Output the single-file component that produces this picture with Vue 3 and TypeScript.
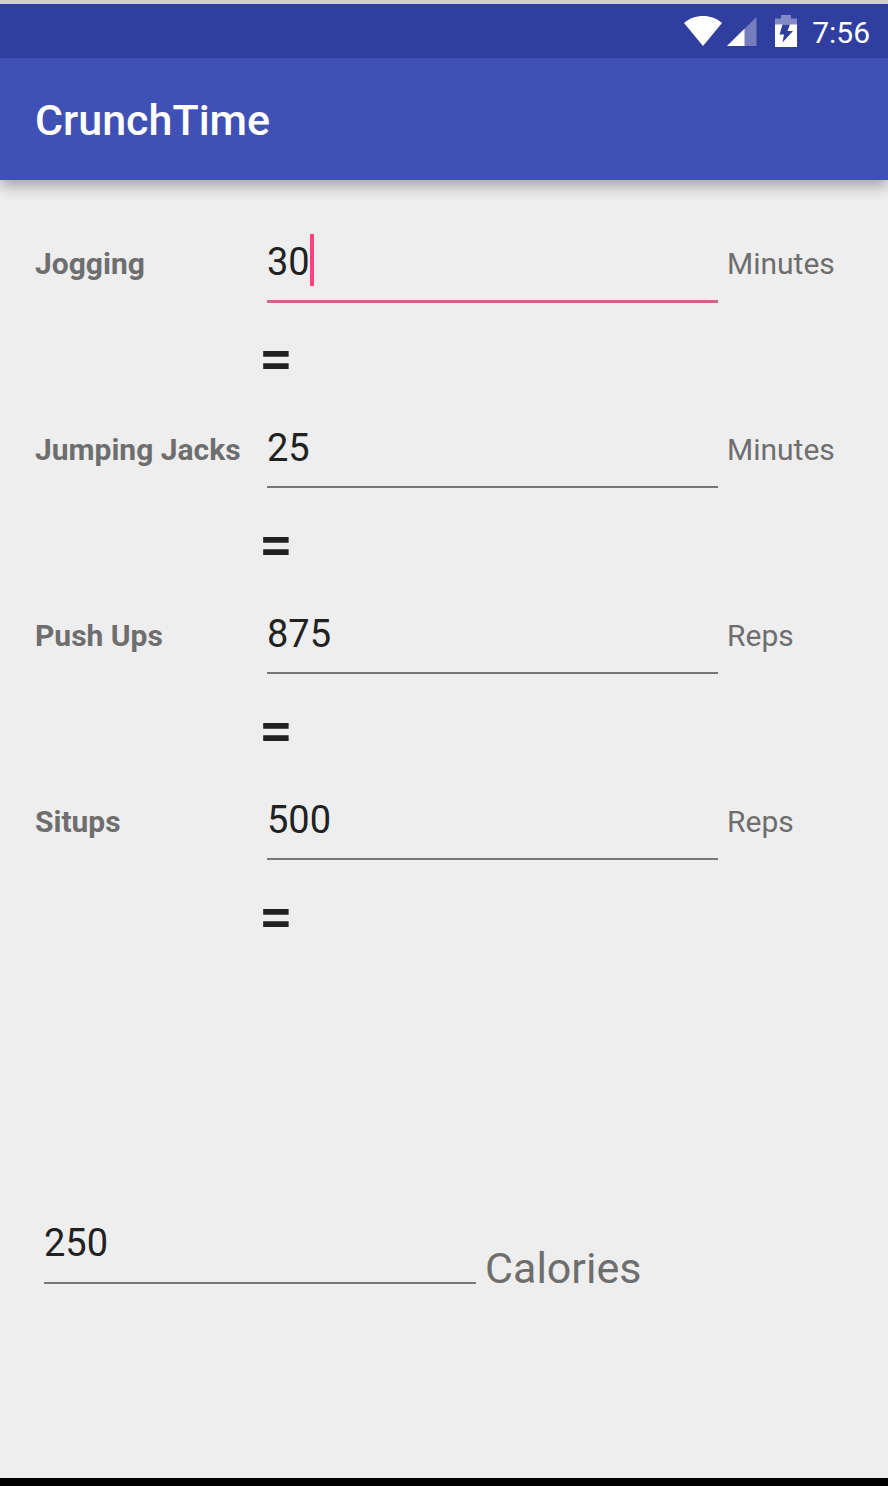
<script setup lang="ts">
import { computed, ref } from 'vue'

interface Exercise {
  id: string
  label: string
  unit: string
  perHundredCalories: number
}

const exercises: Exercise[] = [
  { id: 'jogging', label: 'Jogging', unit: 'Minutes', perHundredCalories: 12 },
  { id: 'jacks', label: 'Jumping Jacks', unit: 'Minutes', perHundredCalories: 10 },
  { id: 'pushups', label: 'Push Ups', unit: 'Reps', perHundredCalories: 350 },
  { id: 'situps', label: 'Situps', unit: 'Reps', perHundredCalories: 200 },
]

const calories = ref(250)
const active = ref('jogging')

const amounts = computed(() =>
  exercises.map((e) => String(Math.round((calories.value * e.perHundredCalories) / 100))),
)

function setAmount(exercise: Exercise, event: Event) {
  const value = Number((event.target as HTMLInputElement).value) || 0
  calories.value = Math.round((value * 100) / exercise.perHundredCalories)
}

function setCalories(event: Event) {
  calories.value = Number((event.target as HTMLInputElement).value) || 0
}
</script>

<template>
  <div class="screen">
    <div class="status">
      <svg class="wifi" width="40" height="32" viewBox="0 0 40 32" aria-hidden="true">
        <path d="M0 8C5 3.500 12 1 19 1s14 2.500 19 7L19 31z" fill="#fff" />
      </svg>
      <svg class="signal" width="30" height="32" viewBox="0 0 30 32" aria-hidden="true">
        <path d="M0 31L29.500 2v29z" fill="#757dbd" />
        <path d="M0 31L17.500 13.800V31z" fill="#fff" />
      </svg>
      <svg class="battery" width="22" height="32" viewBox="0 0 22 32" aria-hidden="true">
        <path d="M0 10V3.500h6V0h10v3.500h6V10z" fill="#838bc5" />
        <path d="M0 9.500h22V32H0z" fill="#fff" />
        <path d="M7.500 9.500H15l-2.500 6.500H18L7.500 27.500l1.500-8H4.500z" fill="#303f9f" />
      </svg>
      <time class="clock">7:56</time>
    </div>
    <header class="bar">
      <h1>CrunchTime</h1>
    </header>
    <main>
      <form class="list" @submit.prevent>
        <template v-for="(item, i) in exercises" :key="item.id">
          <div class="row">
            <label class="name" :for="item.id">{{ item.label }}</label>
            <div class="field" :class="{ active: active === item.id }">
              <input
                :id="item.id"
                type="text"
                inputmode="numeric"
                :value="amounts[i]"
                @focus="active = item.id"
                @change="setAmount(item, $event)"
              />
              <span
                v-if="active === item.id"
                class="caret"
                :style="{ left: amounts[i].length + 'ch' }"
              ></span>
            </div>
            <span class="unit">{{ item.unit }}</span>
          </div>
          <div class="equals">=</div>
        </template>
      </form>
      <div class="total">
        <div class="field">
          <input
            id="calories"
            type="text"
            inputmode="numeric"
            :value="calories"
            @change="setCalories"
          />
        </div>
        <label for="calories">Calories</label>
      </div>
    </main>
  </div>
</template>

<style>
body {
  background: #eee;
}
</style>

<style scoped>
.screen {
  box-sizing: border-box;
  min-height: 100vh;
  display: flex;
  flex-direction: column;
  overflow: hidden;
  border-top: 4px solid #cfcfcf;
  border-bottom: 8px solid #000;
  background: #eee;
  color: #6e6e6e;
  font-family: Roboto, sans-serif;
}
.status {
  display: flex;
  justify-content: flex-end;
  align-items: center;
  height: 54px;
  padding-right: 18px;
  background: #303f9f;
}
.signal {
  margin-left: 3px;
}
.battery {
  margin-left: 18px;
}
.clock {
  margin-left: 15px;
  color: #fff;
  font-size: 30px;
  line-height: 52px;
  padding-top: 4px;
}
.bar {
  position: relative;
  display: flex;
  align-items: center;
  height: 120px;
  padding: 2px 35px 0;
  background: #3f51b5;
  box-shadow: 0 6px 14px rgba(0, 0, 0, 0.32);
}
.status {
  position: relative;
  z-index: 1;
}
h1 {
  margin: 0;
  color: #fff;
  font-size: 43px;
  font-weight: 500;
  line-height: 56px;
}
main {
  flex: 1;
  display: flex;
  flex-direction: column;
  justify-content: space-between;
  padding: 54px 0 194px;
}
.row {
  display: grid;
  grid-template-columns: 232px minmax(0, 1fr) 170px;
  height: 68px;
  padding-left: 35px;
}
.name,
.unit {
  font-size: 30px;
  line-height: 60px;
}
.name {
  font-weight: 700;
}
.unit {
  padding-left: 9px;
}
.field {
  position: relative;
  font-size: 38px;
  border-bottom: 2px solid #777;
}
.field.active {
  border-bottom: 3px solid #d0648c;
}
input {
  display: block;
  box-sizing: border-box;
  width: 100%;
  height: 66px;
  margin: 0;
  padding: 0 0 12px;
  border: 0;
  outline: 0;
  background: transparent;
  color: #212121;
  caret-color: transparent;
  font: inherit;
}
.row input {
  padding-bottom: 10px;
}
.caret {
  position: absolute;
  top: 0;
  width: 4px;
  height: 52px;
  background: #ff4081;
}
.equals {
  height: 118px;
  padding-left: 259px;
  color: #212121;
  font-size: 60px;
  font-weight: 500;
  line-height: 114px;
}
.total {
  display: grid;
  grid-template-columns: 432fr 403fr;
  column-gap: 9px;
  align-items: end;
  padding-left: 44px;
}
.total label {
  font-size: 43px;
  line-height: 32px;
}
</style>
